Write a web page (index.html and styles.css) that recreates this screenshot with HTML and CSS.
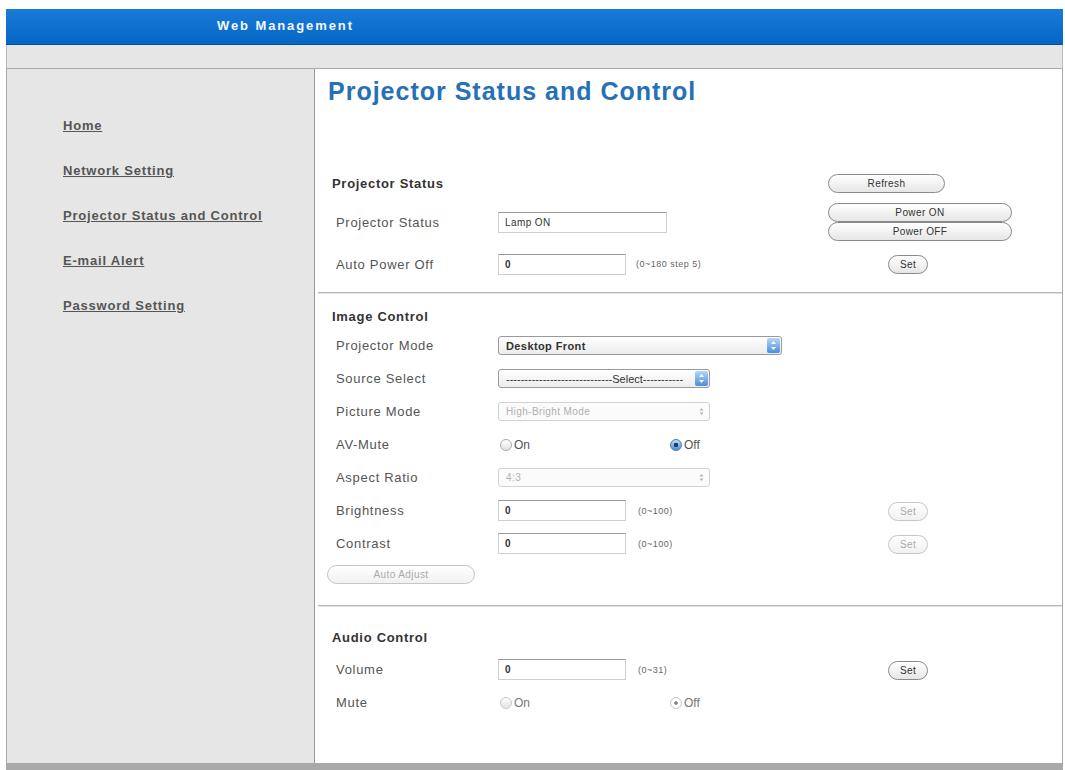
FILE: index.html
```html
<!DOCTYPE html>
<html>
<head>
<meta name="viewport" content="width=device-width, initial-scale=1">
<link rel="stylesheet" href="styles.css">
</head>
<body>

  <div class="frame">
    <!-- Header -->
    <div class="topbar">Web Management</div>
    <div class="strip"></div>

    <div class="layout">
      <!-- Side menu -->
      <div class="side">
        <a href="#">Home</a>
        <a href="#">Network Setting</a>
        <a href="#">Projector Status and Control</a>
        <a href="#">E-mail Alert</a>
        <a href="#">Password Setting</a>
      </div>

      <!-- Content -->
      <div class="main">
        <h1>Projector Status and Control</h1>

        <div class="group status">
          <div class="row head">
            <h2>Projector Status</h2>
            <div></div>
            <div><button class="btn refresh">Refresh</button></div>
          </div>
          <div class="row tall">
            <label>Projector Status</label>
            <div class="ctl"><input type="text" class="wide" value="Lamp ON"></div>
            <div class="pair">
              <button class="btn power">Power ON</button>
              <button class="btn power">Power OFF</button>
            </div>
          </div>
          <div class="row tall">
            <label>Auto Power Off</label>
            <div class="ctl"><input type="text" class="num" value="0"><span class="note">(0~180 step 5)</span></div>
            <div><button class="btn set">Set</button></div>
          </div>
        </div>

        <hr>

        <div class="group image">
          <div class="row head">
            <h2>Image Control</h2>
          </div>
          <div class="row">
            <label>Projector Mode</label>
            <div class="ctl"><span class="select long bold">Desktop Front<span class="arrows"><svg width="7" height="11" viewBox="0 0 7 11"><path d="M3.5 1 L6 4 H1 Z M3.5 10 L6 7 H1 Z" fill="#fff"/></svg></span></span></div>
          </div>
          <div class="row">
            <label>Source Select</label>
            <div class="ctl"><span class="select">-----------------------------Select-----------<span class="arrows"><svg width="7" height="11" viewBox="0 0 7 11"><path d="M3.5 1 L6 4 H1 Z M3.5 10 L6 7 H1 Z" fill="#fff"/></svg></span></span></div>
          </div>
          <div class="row">
            <label>Picture Mode</label>
            <div class="ctl"><span class="select off">High-Bright Mode<span class="arrows"><svg width="7" height="11" viewBox="0 0 7 11"><path d="M3.5 2 L5.5 4.5 H1.5 Z M3.5 9 L5.5 6.5 H1.5 Z" fill="#b5b5b5"/></svg></span></span></div>
          </div>
          <div class="row">
            <label>AV-Mute</label>
            <div class="ctl">
              <span class="radio first"><span class="dot"></span>On</span>
              <span class="radio"><span class="dot on"></span>Off</span>
            </div>
          </div>
          <div class="row">
            <label>Aspect Ratio</label>
            <div class="ctl"><span class="select off">4:3<span class="arrows"><svg width="7" height="11" viewBox="0 0 7 11"><path d="M3.5 2 L5.5 4.5 H1.5 Z M3.5 9 L5.5 6.5 H1.5 Z" fill="#b5b5b5"/></svg></span></span></div>
          </div>
          <div class="row">
            <label>Brightness</label>
            <div class="ctl"><input type="text" class="num" value="0"><span class="note wide-gap">(0~100)</span></div>
            <div><button class="btn set" disabled>Set</button></div>
          </div>
          <div class="row">
            <label>Contrast</label>
            <div class="ctl"><input type="text" class="num" value="0"><span class="note wide-gap">(0~100)</span></div>
            <div><button class="btn set" disabled>Set</button></div>
          </div>
          <div class="row auto">
            <button class="btn adjust" disabled>Auto Adjust</button>
          </div>
        </div>

        <hr class="lower">

        <div class="group audio">
          <div class="row head">
            <h2>Audio Control</h2>
          </div>
          <div class="row">
            <label>Volume</label>
            <div class="ctl"><input type="text" class="num" value="0"><span class="note wide-gap">(0~31)</span></div>
            <div><button class="btn set">Set</button></div>
          </div>
          <div class="row">
            <label>Mute</label>
            <div class="ctl">
              <span class="radio first dim"><span class="dot"></span>On</span>
              <span class="radio dim"><span class="dot mark"></span>Off</span>
            </div>
          </div>
        </div>
      </div>
    </div>

    <div class="bottom"></div>
  </div>

</body>
</html>
```

FILE: styles.css
```css
* {box-sizing: border-box}

body {
  margin: 0;
  background: #fff;
  font-family: "Liberation Sans", Arial, sans-serif;
  color: #555;
}

.frame {
  margin: 9px 2px 0 6px;
}

/* Blue title bar */
.topbar {
  height: 36px;
  background: linear-gradient(#1a7ad8, #0666c6);
  border-bottom: 1px solid #0b4f96;
  color: #f4f8ff;
  font-size: 13px;
  font-weight: bold;
  letter-spacing: 1.9px;
  line-height: 34px;
  padding-left: 211px;
}

.strip {
  height: 24px;
  background: #e6e6e6;
  border-bottom: 1px solid #a9a9a9;
  border-left: 1px solid #bbb;
  border-right: 1px solid #bbb;
}

.layout {
  display: flex;
  height: 694px;
}

/* Side menu */
.side {
  width: 309px;
  background: #e6e6e6;
  border-left: 1px solid #aaa;
  border-right: 1px solid #999;
  padding: 49px 0 0 56px;
}

.side a {
  display: block;
  height: 16px;
  line-height: 16px;
  margin-bottom: 29px;
  font-size: 13px;
  font-weight: bold;
  letter-spacing: 0.8px;
  color: #555;
  text-decoration: underline;
}

/* Content */
.main {
  flex: 1;
  border-right: 1px solid #aaa;
  padding-left: 21px;
}

h1 {
  margin: 7px 0 0 -8px;
  font-size: 25px;
  letter-spacing: 1px;
  line-height: 30px;
  color: #2670b8;
}

h2 {
  margin: 0 0 0 -4px;
  font-size: 13px;
  letter-spacing: 0.7px;
  color: #333;
}

.status {
  margin-top: 65px;
}

.row {
  display: grid;
  grid-template-columns: 162px 330px 1fr;
  align-items: center;
  height: 33px;
}

.row.head {
  height: 24px;
}

.status .head {
  margin-bottom: 6px;
}

.row.tall {
  height: 42px;
}

.image .head {
  margin-top: 10px;
  height: 25px;
}

.audio .head {
  margin-top: 18px;
  margin-bottom: 4px;
}

.row.auto {
  display: block;
  height: 27px;
  padding-top: 4px;
}

label {
  font-size: 13px;
  letter-spacing: 0.7px;
  color: #555;
}

hr {
  border: 0;
  border-top: 1px solid #b9b9b9;
  border-bottom: 1px solid #e2e2e2;
  margin: 7px 0 0 -18px;
}

hr.lower {
  margin-top: 18px;
}

.ctl {
  display: flex;
  align-items: center;
}

/* Text inputs */
input {
  height: 21px;
  border: 1px solid #cfcfcf;
  border-top-color: #9a9a9a;
  padding: 0 6px;
  font-family: inherit;
  font-size: 10px;
  font-weight: bold;
  color: #333;
  background: #fff;
}

input.wide {
  width: 169px;
  font-weight: normal;
  letter-spacing: 0.4px;
}

input.num {
  width: 128px;
}

.note {
  margin-left: 10px;
  font-size: 9px;
  letter-spacing: 0.5px;
  color: #666;
}

.note.wide-gap {
  margin-left: 12px;
}

/* Buttons */
.btn {
  height: 19px;
  padding: 0;
  border: 1px solid #8a8a8a;
  border-radius: 10px;
  background: linear-gradient(#ffffff, #e6e6e6);
  font-family: inherit;
  font-size: 10px;
  letter-spacing: 0.4px;
  color: #333;
}

.btn:disabled {
  border-color: #c6c6c6;
  background: linear-gradient(#ffffff, #f1f1f1);
  color: #aaa;
}

.refresh {
  width: 117px;
}

.power {
  width: 184px;
}

.pair {
  display: flex;
  flex-direction: column;
}

.set {
  width: 40px;
  margin-left: 60px;
}

.adjust {
  width: 148px;
  margin-left: -9px;
}

/* Select boxes */
.select {
  position: relative;
  display: flex;
  align-items: center;
  width: 212px;
  height: 19px;
  padding-left: 7px;
  border: 1px solid #9a9a9a;
  border-radius: 3px;
  background: linear-gradient(#ffffff, #ececec);
  font-size: 11px;
  color: #333;
  white-space: nowrap;
  overflow: hidden;
}

.select.long {
  width: 284px;
}

.select.bold {
  font-weight: bold;
  letter-spacing: 0.4px;
}

.select .arrows {
  position: absolute;
  right: 1px;
  top: 1px;
  width: 13px;
  height: 15px;
  border-radius: 2px;
  background: linear-gradient(#b5d6f7, #4a8fdb);
  display: flex;
  align-items: center;
  justify-content: center;
}

.select.off {
  border-color: #d2d2d2;
  background: #fbfbfb;
  color: #b0b0b0;
  font-size: 10px;
  letter-spacing: 0.4px;
}

.select.off .arrows {
  background: none;
}

/* Radio buttons */
.radio {
  display: inline-flex;
  align-items: center;
  gap: 2px;
  font-size: 12px;
  color: #555;
}

.radio.first {
  width: 172px;
  padding-left: 2px;
}

.radio.dim {
  color: #777;
}

.dot {
  width: 12px;
  height: 12px;
  border-radius: 50%;
  border: 1px solid #aaa;
  background: linear-gradient(#ffffff, #e2e2e2);
}

.dot.on {
  border-color: #4a7bb5;
  background: radial-gradient(circle, #1f3c66 0 2px, transparent 2.5px), linear-gradient(#bcdaf8, #4b8fdc);
}

.radio.dim .dot {
  border-color: #c8c8c8;
}

.dot.mark {
  background: radial-gradient(circle, #888 0 1.5px, transparent 2px), #fff;
}

.bottom {
  height: 7px;
  background: #a9a9a9;
}
```
